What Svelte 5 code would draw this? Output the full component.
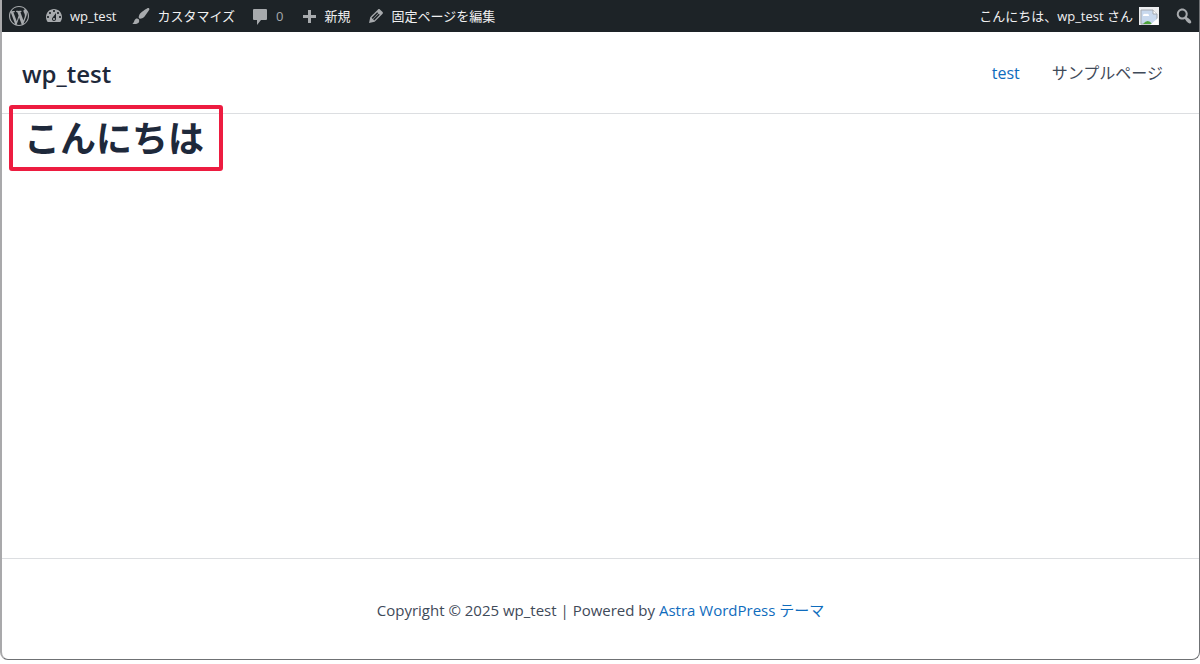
<script lang="ts">
	const siteName = 'wp_test';
	const userName = 'wp_test';
	const commentCount = 0;

	const icons: Record<string, string> = {
		wordpress:
			'M20 10c0-5.51-4.49-10-10-10C4.48 0 0 4.49 0 10c0 5.52 4.48 10 10 10 5.51 0 10-4.48 10-10zM7.78 15.37L4.37 6.22c.55-.02 1.17-.08 1.17-.08.5-.06.44-1.13-.06-1.11 0 0-1.45.11-2.37.11-.18 0-.37 0-.58-.01C4.12 2.69 6.87 1.11 10 1.11c2.33 0 4.45.87 6.05 2.34-.68-.11-1.65.39-1.65 1.58 0 .74.45 1.36.9 2.1.35.61.55 1.36.55 2.46 0 1.49-1.4 5-1.4 5l-3.03-8.37c.54-.02.82-.17.82-.17.5-.05.44-1.25-.06-1.22 0 0-1.44.12-2.38.12-.87 0-2.33-.12-2.33-.12-.5-.03-.56 1.2-.06 1.22l.92.08 1.26 3.41zM17.41 10c.24-.64.74-1.87.43-4.25.7 1.29 1.05 2.71 1.05 4.25 0 3.29-1.73 6.24-4.4 7.78.97-2.59 1.94-5.2 2.92-7.78zM6.1 18.09C3.12 16.65 1.11 13.53 1.11 10c0-1.3.23-2.48.72-3.59C3.25 10.3 4.67 14.2 6.1 18.09zm4.03-6.63l2.58 6.98c-.86.29-1.76.45-2.71.45-.79 0-1.57-.11-2.29-.33.81-2.38 1.62-4.74 2.42-7.1z',
		dashboard:
			'M3.76 16h12.48c1.1-1.37 1.76-3.11 1.76-5 0-4.42-3.58-8-8-8s-8 3.58-8 8c0 1.89.66 3.63 1.76 5zM10 4c.55 0 1 .45 1 1s-.45 1-1 1-1-.45-1-1 .45-1 1-1zM6 6c.55 0 1 .45 1 1s-.45 1-1 1-1-.45-1-1 .45-1 1-1zm8 0c.55 0 1 .45 1 1s-.45 1-1 1-1-.45-1-1 .45-1 1-1zm-5.37 5.55L12 7v6c0 1.1-.9 2-2 2s-2-.9-2-2c0-.57.24-1.08.63-1.45zM4 10c.55 0 1 .45 1 1s-.45 1-1 1-1-.45-1-1 .45-1 1-1zm12 0c.55 0 1 .45 1 1s-.45 1-1 1-1-.45-1-1 .45-1 1-1zm-5 3c0-.55-.45-1-1-1s-1 .45-1 1 .45 1 1 1 1-.45 1-1z',
		brush:
			'M18.33 3.57s.27-.8-.31-1.36c-.53-.52-1.22-.24-1.22-.24-.61.3-5.76 3.47-7.67 5.57-.86.96-2.06 3.79-1.09 4.82.92.98 3.96-.17 4.79-1 2.06-2.06 5.21-7.17 5.5-7.79zM1.4 17.65c2.37-1.56 1.46-3.41 3.23-4.64.93-.65 2.22-.62 3.08.29.63.67.8 2.57-.16 3.46-1.57 1.45-4 1.55-6.15.89z',
		comment:
			'M4 3h12q1 0 1 1v9q0 1-1 1h-5l-4 5v-5H4q-1 0-1-1V4q0-1 1-1z',
		plus: 'M17 9v3h-5v5H9v-5H4V9h5V4h3v5h5z',
		edit: 'M13.89 3.39l2.71 2.72c.46.46.42 1.24.03 1.64l-8.01 8.02-5.56 1.16 1.16-5.58s7.6-7.63 7.99-8.03c.39-.39 1.22-.39 1.68.07zm-2.73 2.79l-5.59 5.61 1.11 1.11 5.54-5.65zm-2.97 8.23l5.58-5.6-1.07-1.08-5.59 5.6z',
		search:
			'M12.14 4.18c1.87 1.87 2.11 4.75.72 6.89.12.1.22.21.36.31.2.16.47.36.81.59.34.24.56.39.66.47.42.31.73.57.94.78.32.32.6.65.84 1 .25.35.44.69.59 1.04.14.35.21.68.18 1-.02.32-.14.59-.36.81s-.49.34-.81.36c-.31.02-.65-.04-.99-.19-.35-.14-.7-.34-1.04-.59-.35-.24-.68-.52-1-.84-.21-.21-.47-.52-.77-.93-.1-.13-.25-.35-.47-.66-.22-.32-.4-.57-.56-.78-.16-.2-.29-.35-.44-.5-2.07 1.09-4.69.76-6.44-.98-2.14-2.15-2.14-5.64 0-7.78 2.15-2.15 5.63-2.15 7.78 0zm-1.41 6.36c1.36-1.37 1.36-3.58 0-4.95-1.37-1.37-3.59-1.37-4.95 0-1.37 1.37-1.37 3.58 0 4.95 1.36 1.37 3.58 1.37 4.95 0z'
	};
</script>

{#snippet icon(name: string)}
	<svg class="icon" viewBox="0 0 20 20" aria-hidden="true"><path d={icons[name]} /></svg>
{/snippet}

<div class="window">
	<nav class="adminbar" aria-label="ツールバー">
		<a href="#about" aria-label="WordPress について">{@render icon('wordpress')}</a>
		<a href="#dashboard">{@render icon('dashboard')}<span>{siteName}</span></a>
		<a href="#customize">{@render icon('brush')}<span>カスタマイズ</span></a>
		<a href="#comments" class="comments">{@render icon('comment')}<span>{commentCount}</span></a>
		<a href="#new">{@render icon('plus')}<span>新規</span></a>
		<a href="#edit">{@render icon('edit')}<span>固定ページを編集</span></a>
		<a href="#profile" class="account">
			<span>こんにちは、{userName} さん</span>
			<svg class="avatar" viewBox="0 0 20 18" aria-hidden="true">
				<rect width="20" height="18" fill="#eceef0" />
				<path d="M2 3h12l4 4v10H2z" fill="#c8d9ee" stroke="#a3a8ae" />
				<path d="M14 3v4h4" fill="#fff" stroke="#a3a8ae" />
				<path d="M4 9a2 2 0 0 1 3-2 2 2 0 0 1 3 2z" fill="#fff" />
				<path d="M4 17q5-6 9 0z" fill="#4fa53d" />
				<path d="M11 18l8-7v7z" fill="#fff" />
			</svg>
		</a>
		<button type="button" aria-label="検索">{@render icon('search')}</button>
	</nav>

	<header class="site-header">
		<a class="site-title" href="#home">{siteName}</a>
		<nav class="menu" aria-label="サイト">
			<a class="current" href="#test">test</a>
			<a href="#sample">サンプルページ</a>
		</nav>
	</header>

	<main>
		<h1>こんにちは</h1>
	</main>

	<footer>
		<p>Copyright © 2025 {siteName} | Powered by <a href="#astra">Astra WordPress テーマ</a></p>
	</footer>
</div>

<style>
	:global(body) {
		margin: 0;
		background: #fff;
	}
	.window {
		display: flex;
		flex-direction: column;
		box-sizing: border-box;
		min-height: calc(100vh - 4px);
		border: 1px solid #6f7174;
		border-top: 0;
		border-left: 2px solid #a9a9ab;
		border-radius: 0 0 8px 8px;
		background: #fff;
		color: #3f4a59;
		font-family: 'Open Sans', 'Noto Sans CJK JP', sans-serif;
		font-size: 15px;
		line-height: 24px;
	}
	a {
		color: inherit;
		text-decoration: none;
	}
	.adminbar {
		display: flex;
		align-items: center;
		height: 32px;
		padding: 0 5px 0 7px;
		gap: 15px;
		background: #1d2327;
		color: #f0f0f1;
		font-size: 13px;
		line-height: 30px;
		white-space: nowrap;
	}
	.adminbar a {
		display: flex;
		align-items: center;
		gap: 6px;
	}
	.adminbar button {
		display: flex;
		padding: 0;
		border: 0;
		background: none;
	}
	.icon {
		width: 20px;
		height: 20px;
		fill: #a7aaad;
	}
	.comments span {
		color: #a7aaad;
	}
	.adminbar .account {
		margin-left: auto;
	}
	.avatar {
		width: 20px;
		height: 18px;
	}
	.site-header {
		display: flex;
		align-items: center;
		justify-content: space-between;
		height: 81px;
		padding: 0 36px 0 20px;
		border-bottom: 1px solid #dcdee1;
	}
	.site-title {
		padding-top: 3px;
		color: #1e293b;
		font-size: 24px;
		font-weight: 600;
		line-height: 32px;
	}
	.menu {
		display: flex;
		gap: 32px;
		font-size: 16px;
	}
	.menu .current,
	footer a {
		color: #0f6cbd;
	}
	main {
		flex: 1;
		padding: 0 7px;
	}
	h1 {
		width: max-content;
		margin: -9px 0 0;
		padding: 2px 15px 0 11px;
		border: 4px solid #ed1c40;
		border-radius: 3px;
		color: #1e293b;
		font-size: 36px;
		font-weight: 700;
		line-height: 56px;
	}
	footer {
		padding: 39px 20px 37px;
		border-top: 1px solid #dcdee1;
		text-align: center;
	}
	footer p {
		margin: 0;
	}
</style>
